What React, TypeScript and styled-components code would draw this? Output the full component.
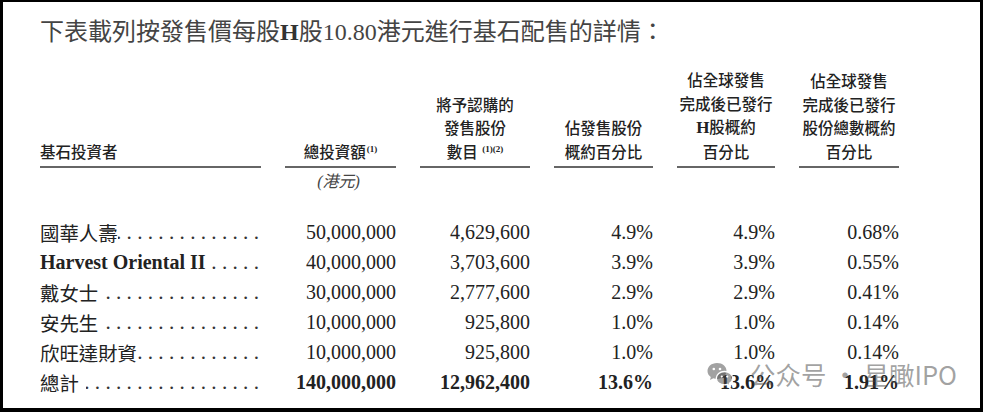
import React from "react";
import styled, { createGlobalStyle } from "styled-components";

const SERIF = `"Liberation Serif", "Noto Sans CJK TC", serif`;
const HEI = `"Noto Sans CJK TC", "Noto Sans CJK SC", sans-serif`;

const GlobalStyle = createGlobalStyle`
  html, body { margin: 0; padding: 0; background: #fff; }
  body { width: 983px; height: 412px; overflow: hidden; }
`;

const Frame = styled.div`
  position: relative;
  box-sizing: border-box;
  width: 983px;
  height: 412px;
  border-style: solid;
  border-color: #000;
  border-width: 2px 3px 4px 3px;
  padding: 15px 0 0 37px;
  background: #fff;
  overflow: hidden;
`;

const Title = styled.h1`
  margin: 0;
  font-family: ${SERIF};
  font-weight: 400;
  font-size: 24px;
  line-height: 30px;
  color: #444;
  white-space: nowrap;
  b { font-weight: 700; color: #333; }
`;

const Row = styled.div<{ $h?: number; $mt?: number }>`
  display: grid;
  grid-template-columns: 221px 111px 110px 99px 98px 100px;
  column-gap: 24px;
  align-items: ${(p) => (p.$h ? "center" : "end")};
  height: ${(p) => (p.$h ? `${p.$h}px` : "auto")};
  margin-top: ${(p) => p.$mt ?? 0}px;
`;

const Body = styled.div`
  margin-top: 25px;
`;

const HeadCell = styled.div<{ $left?: boolean }>`
  box-sizing: border-box;
  align-self: stretch;
  display: flex;
  flex-direction: column;
  justify-content: flex-end;
  align-items: ${(p) => (p.$left ? "flex-start" : "center")};
  padding-bottom: 3px;
  border-bottom: 2px solid #666;
  font-family: ${HEI};
  font-weight: 500;
  font-size: 15.5px;
  line-height: 23.5px;
  color: #222;
  white-space: nowrap;
  b { font-family: ${SERIF}; font-weight: 700; font-size: 17px; }
`;

const Sup = styled.sup`
  font-family: ${SERIF};
  font-weight: 700;
  font-size: 9px;
  line-height: 0;
  vertical-align: 6px;
  margin-left: 1px;
`;

const Unit = styled.div`
  grid-column: 2;
  text-align: center;
  font-family: ${SERIF};
  font-style: italic;
  font-size: 16px;
  line-height: 20px;
  color: #444;
  padding-right: 4px;
`;

const NameCell = styled.div`
  display: flex;
  align-items: center;
  min-width: 0;
  padding-right: 2px;
`;

const Name = styled.span<{ $latin?: boolean }>`
  flex: none;
  font-family: ${(p) => (p.$latin ? SERIF : HEI)};
  font-weight: ${(p) => (p.$latin ? 700 : 400)};
  font-size: ${(p) => (p.$latin ? "20px" : "19.4px")};
  color: #222;
  white-space: nowrap;
`;

const Leader = styled.span<{ $gap?: number }>`
  flex: 1;
  min-width: 0;
  margin-left: ${(p) => p.$gap ?? 0}px;
  overflow: hidden;
  white-space: nowrap;
  direction: rtl;
  font-family: ${SERIF};
  font-size: 21.2px;
  color: #333;
`;

const Num = styled.div<{ $bold?: boolean }>`
  text-align: right;
  font-family: ${SERIF};
  font-weight: ${(p) => (p.$bold ? 700 : 400)};
  font-size: 20px;
  color: #222;
  white-space: nowrap;
`;

const Watermark = styled.div`
  position: absolute;
  left: 703px;
  top: 356px;
  display: flex;
  align-items: center;
  gap: 16px;
  font-family: "Noto Sans CJK SC", "Noto Sans", sans-serif;
  font-size: 25.5px;
  line-height: 32px;
  color: rgba(70, 70, 70, 0.5);
  white-space: nowrap;
  pointer-events: none;
`;

const WeChat = () => (
  <svg width="28" height="26" viewBox="0 0 28 26" aria-hidden="true">
    <path
      d="M11 2C5.5 2 1.5 5.6 1.5 10c0 2.5 1.3 4.6 3.3 6.1L4 19l3.3-1.7c1.2.4 2.4.6 3.7.6 5.5 0 9.5-3.6 9.5-8S16.5 2 11 2z"
      fill="rgba(70,70,70,0.5)"
    />
    <circle cx="7.8" cy="8" r="1.3" fill="#fff" />
    <circle cx="14" cy="8" r="1.3" fill="#fff" />
    <path
      d="M18.5 10.5c-4.6 0-8.2 3-8.2 6.7s3.6 6.7 8.2 6.7c1 0 2-.2 2.9-.5l2.8 1.4-.7-2.4c1.9-1.2 3.2-3.1 3.2-5.2 0-3.7-3.6-6.7-8.2-6.7z"
      fill="rgba(70,70,70,0.5)"
      stroke="#fff"
      strokeWidth="1.4"
    />
    <circle cx="15.8" cy="15.6" r="1.1" fill="#fff" />
    <circle cx="21.2" cy="15.6" r="1.1" fill="#fff" />
  </svg>
);

type Data = {
  name: string;
  latin?: boolean;
  total?: boolean;
  gap?: number;
  vals: [string, string, string, string, string];
};

const rows: Data[] = [
  { name: "國華人壽", vals: ["50,000,000", "4,629,600", "4.9%", "4.9%", "0.68%"] },
  { name: "Harvest Oriental II", latin: true, gap: 4, vals: ["40,000,000", "3,703,600", "3.9%", "3.9%", "0.55%"] },
  { name: "戴女士", gap: 7, vals: ["30,000,000", "2,777,600", "2.9%", "2.9%", "0.41%"] },
  { name: "安先生", gap: 7, vals: ["10,000,000", "925,800", "1.0%", "1.0%", "0.14%"] },
  { name: "欣旺達財資", vals: ["10,000,000", "925,800", "1.0%", "1.0%", "0.14%"] },
  { name: "總計", total: true, gap: 7, vals: ["140,000,000", "12,962,400", "13.6%", "13.6%", "1.91%"] },
];

const DOTS = ". ".repeat(30).trim();

export default function App() {
  return (
    <>
      <GlobalStyle />
      <Frame>
        <Title>
          下表載列按發售價每股<b>H</b>股10.80港元進行基石配售的詳情：
        </Title>

        <Row $mt={21}>
          <HeadCell $left>
            <span>基石投資者</span>
          </HeadCell>
          <HeadCell>
            <span>
              總投資額<Sup>(1)</Sup>
            </span>
          </HeadCell>
          <HeadCell>
            <span>將予認購的</span>
            <span>發售股份</span>
            <span>
              數目 <Sup>(1)(2)</Sup>
            </span>
          </HeadCell>
          <HeadCell>
            <span>佔發售股份</span>
            <span>概約百分比</span>
          </HeadCell>
          <HeadCell>
            <span>佔全球發售</span>
            <span>完成後已發行</span>
            <span>
              <b>H</b>股概約
            </span>
            <span>百分比</span>
          </HeadCell>
          <HeadCell>
            <span>佔全球發售</span>
            <span>完成後已發行</span>
            <span>股份總數概約</span>
            <span>百分比</span>
          </HeadCell>
        </Row>

        <Row $h={20} $mt={4}>
          <Unit>(港元)</Unit>
        </Row>

        <Body>
          {rows.map((r) => (
            <Row key={r.name} $h={30}>
              <NameCell>
                <Name $latin={r.latin}>{r.name}</Name>
                <Leader $gap={r.gap}>{DOTS}</Leader>
              </NameCell>
              {r.vals.map((v, i) => (
                <Num key={i} $bold={r.total}>
                  {v}
                </Num>
              ))}
            </Row>
          ))}
        </Body>

        <Watermark>
          <WeChat />
          <span>公众号 · 星瞰IPO</span>
        </Watermark>
      </Frame>
    </>
  );
}
